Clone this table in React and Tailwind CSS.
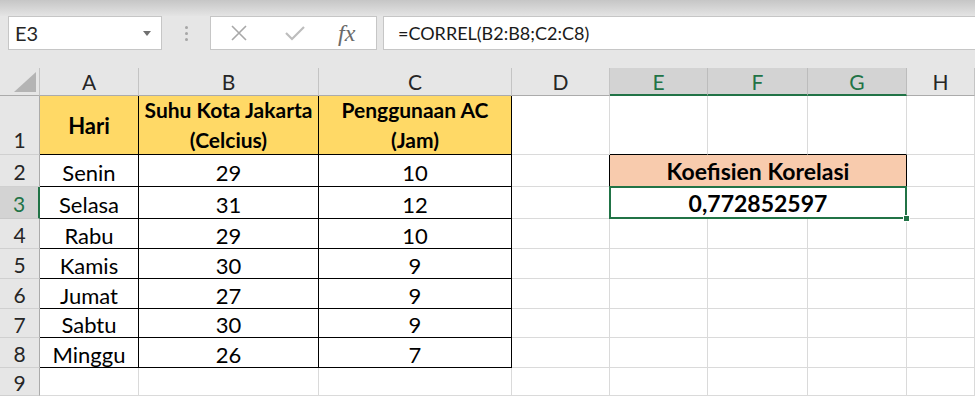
import React from "react";

const COLS = ["A", "B", "C", "D", "E", "F", "G", "H"];
const SELECTED_COLS = ["E", "F", "G"];

const DATA = [
  ["Senin", "29", "10"],
  ["Selasa", "31", "12"],
  ["Rabu", "29", "10"],
  ["Kamis", "30", "9"],
  ["Jumat", "27", "9"],
  ["Sabtu", "30", "9"],
  ["Minggu", "26", "7"],
];

function CornerCell() {
  return (
    <div className="relative border-r border-b border-r-[#c4c4c4] border-b-[#ababab] bg-[#e6e6e6]">
      <svg className="absolute right-[3px] bottom-[3px]" width="22" height="20" viewBox="0 0 22 20">
        <polygon points="22,0 22,20 0,20" fill="#b4b4b4" />
      </svg>
    </div>
  );
}

function ColHeader({ label }) {
  const sel = SELECTED_COLS.includes(label);
  return (
    <div
      className={
        "flex items-center justify-center border-r text-[21px] pt-[1px] " +
        (sel
          ? "bg-[#d3d3d3] text-[#217346] border-r-[#bcbcbc] border-b-2 border-b-[#217346]"
          : "bg-[#e6e6e6] text-[#262626] border-r-[#c4c4c4] border-b border-b-[#ababab]")
      }
    >
      {label}
    </div>
  );
}

function RowHeader({ n, selected, bottomAlign }) {
  return (
    <div
      className={
        "flex justify-center border-b text-[21px] leading-none " +
        (bottomAlign ? "items-end pb-[4px] " : "items-center pt-[2px] ") +
        (selected
          ? "bg-[#d3d3d3] text-[#217346] border-b-[#c8c8c8] border-r-2 border-r-[#217346]"
          : "bg-[#e6e6e6] text-[#262626] border-b-[#d0d0d0] border-r border-r-[#ababab]")
      }
    >
      {n}
    </div>
  );
}

// plain cell with its own right/bottom line; colours come from the caller
function Cell({ children, className = "" }) {
  return (
    <div className={"flex items-center justify-center border-r border-b text-black " + className}>
      {children}
    </div>
  );
}

export default function App() {
  const grid = "border-r-[#dadada] border-b-[#dadada] bg-white";
  const tbl = "border-r-black border-b-black bg-white text-[22px]";

  return (
    <div
      className="w-[975px] h-[396px] overflow-hidden bg-[#e6e6e6]"
      style={{ fontFamily: "Lato, 'Liberation Sans', sans-serif" }}
    >
      {/* ribbon shadow */}
      <div className="h-[16px] bg-gradient-to-b from-[#c6c6c6] to-[#e4e4e4]" />

      {/* name box + formula bar */}
      <div className="flex h-[34px]">
        <div className="ml-[8px] w-[154px] flex items-center justify-between bg-white border border-[#c6c6c6] pl-[6px] pr-[10px]">
          <span className="text-[20px] text-[#262626]">E3</span>
          <svg width="8" height="5" viewBox="0 0 8 5">
            <polygon points="0,0 8,0 4,5" fill="#707070" />
          </svg>
        </div>
        <div className="w-[48px] flex flex-col items-center justify-center gap-[3px]">
          <span className="w-[3px] h-[3px] rounded-full bg-[#a6a6a6]" />
          <span className="w-[3px] h-[3px] rounded-full bg-[#a6a6a6]" />
          <span className="w-[3px] h-[3px] rounded-full bg-[#a6a6a6]" />
        </div>
        <div className="w-[167px] flex items-center bg-white border border-[#c6c6c6]">
          <svg className="ml-[19px]" width="18" height="18" viewBox="0 0 18 18">
            <path d="M2 2 L16 16 M16 2 L2 16" stroke="#a8a8a8" strokeWidth="1.6" fill="none" />
          </svg>
          <svg className="ml-[36px]" width="22" height="18" viewBox="0 0 22 18">
            <path d="M2 9 L8 15 L20 3" stroke="#bdbdbd" strokeWidth="2.2" fill="none" />
          </svg>
          <span
            className="ml-[32px] text-[24px] italic text-[#6a6a6a] leading-none"
            style={{ fontFamily: "'Liberation Serif', serif" }}
          >
            fx
          </span>
        </div>
        <div className="ml-[6px] flex-1 flex items-center bg-white border-y border-l border-[#c6c6c6] pl-[14px]">
          <span className="text-[18px] text-[#1a1a1a]">=CORREL(B2:B8;C2:C8)</span>
        </div>
      </div>

      <div className="h-[18px]" />

      {/* sheet grid */}
      <div className="grid grid-cols-[40px_99px_180px_193px_98px_98px_100px_99px_1fr] grid-rows-[28px_59px_32px_32px_30px_30px_30px_29px_30px_28px]">
        <CornerCell />
        {COLS.map((c) => (
          <ColHeader key={c} label={c} />
        ))}

        {/* row 1: table headings */}
        <RowHeader n={1} bottomAlign />
        <Cell className="bg-[#ffd966] border-r-black border-b-black font-bold text-[22px]">Hari</Cell>
        <Cell className="bg-[#ffd966] border-r-black border-b-black font-bold text-[21px] leading-[30px] text-center flex-col whitespace-nowrap">
          <span>Suhu Kota Jakarta</span>
          <span>(Celcius)</span>
        </Cell>
        <Cell className="bg-[#ffd966] border-r-black border-b-black font-bold text-[21px] leading-[30px] text-center flex-col">
          <span>Penggunaan AC</span>
          <span>(Jam)</span>
        </Cell>
        <Cell className={grid} />
        <Cell className="bg-white border-r-[#dadada] border-b-black" />
        <Cell className="bg-white border-r-[#dadada] border-b-black" />
        <Cell className="bg-white border-r-[#dadada] border-b-black" />
        <Cell className={grid} />

        {DATA.map((row, i) => {
          const r = i + 2;
          return (
            <React.Fragment key={r}>
              <RowHeader n={r} selected={r === 3} />
              {row.map((v, j) => (
                <Cell key={j} className={tbl + " pt-[3px]"}>
                  {v}
                </Cell>
              ))}
              {r === 2 ? (
                <>
                  <Cell className="bg-white border-r-black border-b-[#dadada]" />
                  <Cell className="col-span-3 bg-[#f8cbad] border-r-black border-b-black font-bold text-[23px] pt-[2px]">
                    Koefisien Korelasi
                  </Cell>
                </>
              ) : r === 3 ? (
                <>
                  <Cell className={grid} />
                  <Cell className="col-span-3 relative bg-white border-r-black border-b-[#dadada] font-bold text-[23px] pt-[2px]">
                    0,772852597
                    {/* active cell frame with fill handle */}
                    <span className="absolute -left-[1px] -top-[1px] -right-[1px] -bottom-[1px] border-2 border-[#217346]" />
                    <span className="absolute -right-[4px] -bottom-[4px] w-[7px] h-[7px] bg-[#217346] border border-white" />
                  </Cell>
                </>
              ) : (
                <>
                  <Cell className={grid} />
                  <Cell className={grid} />
                  <Cell className={grid} />
                  <Cell className={grid} />
                </>
              )}
              <Cell className={grid} />
            </React.Fragment>
          );
        })}

        <RowHeader n={9} />
        {COLS.map((c) => (
          <Cell key={c} className={grid} />
        ))}
      </div>
    </div>
  );
}
